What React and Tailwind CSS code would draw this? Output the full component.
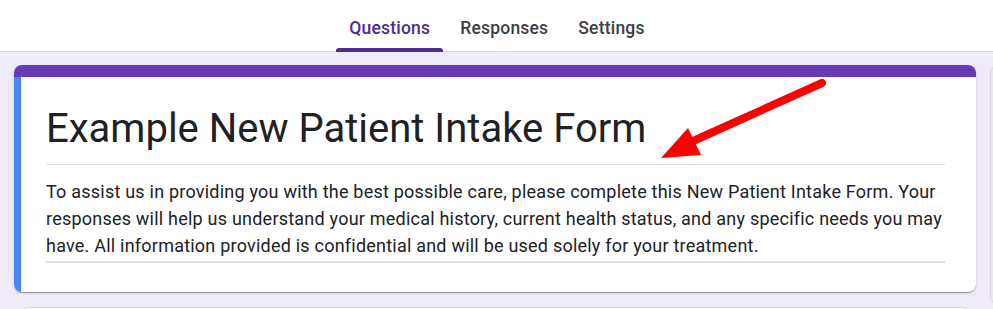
const TABS = [
  { label: "Questions", active: true },
  { label: "Responses", active: false },
  { label: "Settings", active: false },
];

export default function App() {
  return (
    <div className="relative w-[993px] h-[309px] overflow-hidden bg-[#f0ebf8]" style={{ fontFamily: "Roboto, 'Liberation Sans', sans-serif" }}>
      {/* Tabs */}
      <div className="h-[52px] bg-white border-b border-[#dadce0] flex justify-center pl-[1px]">
        <div className="flex items-end gap-[4px]">
          {TABS.map((t) => (
            <div key={t.label} className="relative h-full flex flex-col items-center justify-center px-[13px]">
              <span className={`text-[17.5px] font-medium tracking-[0.2px] mt-[6px] ${t.active ? "text-[#4c2c92]" : "text-[#3c4043]"}`}>
                {t.label}
              </span>
              {t.active && (
                <div className="absolute bottom-[-1px] left-0 right-0 h-[4px] rounded-t-[3px] bg-[#4c2c92]" />
              )}
            </div>
          ))}
        </div>
      </div>

      {/* Main */}
      <div className="flex gap-[14px] pt-[13px] pl-[14px] h-[240px]">
        <div className="w-[962px] h-[227px] shrink-0 rounded-[8px] bg-white overflow-hidden shadow-[0_2px_1px_-1px_rgba(0,0,0,0.2),0_1px_1px_0_rgba(0,0,0,0.14),0_1px_3px_0_rgba(0,0,0,0.12)]">
          <div className="h-[12px] bg-[#673ab7]" />
          <div className="h-[215px] border-l-[7px] border-[#4285f4] pl-[25px] pr-[31px] pt-[28px]">
            <div className="border-b border-[#e0e0e0] pb-[11px]">
              <h1 className="text-[40px] leading-[48px] text-[#202124] font-normal">
                Example New Patient Intake Form
              </h1>
            </div>
            <p className="mt-[13px] mr-[-22px] text-[18px] leading-[27px] tracking-[0.22px] text-[#202124]">
              To assist us in providing you with the best possible care, please complete this New Patient Intake Form. Your responses will help us understand your medical history, current health status, and any specific needs you may have. All information provided is confidential and will be used solely for your treatment.
            </p>
            <div className="mt-[2px] h-[2px] bg-[#e0e0e0]" />
          </div>
        </div>
        <div className="w-[40px] h-[240px] shrink-0 rounded-[8px] bg-[#ece6f5] border border-[#ddd8e6]" />
      </div>

      <div className="ml-[21px] mt-[15px] w-[949px] h-[20px] bg-white border border-[#dadce0] rounded-t-[8px]" />

      {/* Annotation arrow */}
      <svg className="absolute left-0 top-0 pointer-events-none" width="993" height="309" viewBox="0 0 993 309">
        <line x1="822" y1="83" x2="693" y2="141" stroke="#ff0000" strokeWidth="8" strokeLinecap="round" />
        <polygon points="661,158 688,128 701,155" fill="#ff0000" />
      </svg>
    </div>
  );
}
